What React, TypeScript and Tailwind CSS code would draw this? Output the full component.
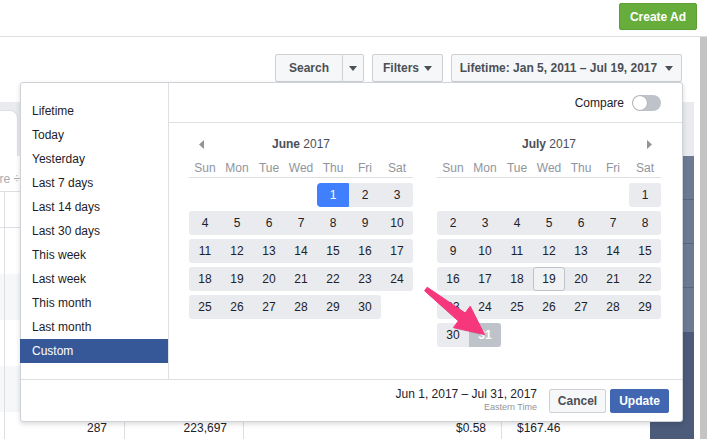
import React from "react";

type Day = number | null;

const june: Day[][] = [
  [null, null, null, null, 1, 2, 3],
  [4, 5, 6, 7, 8, 9, 10],
  [11, 12, 13, 14, 15, 16, 17],
  [18, 19, 20, 21, 22, 23, 24],
  [25, 26, 27, 28, 29, 30, null],
];

const july: Day[][] = [
  [null, null, null, null, null, null, 1],
  [2, 3, 4, 5, 6, 7, 8],
  [9, 10, 11, 12, 13, 14, 15],
  [16, 17, 18, 19, 20, 21, 22],
  [23, 24, 25, 26, 27, 28, 29],
  [30, 31, null, null, null, null, null],
];

const dayNames = ["Sun", "Mon", "Tue", "Wed", "Thu", "Fri", "Sat"];

const presets = [
  "Lifetime",
  "Today",
  "Yesterday",
  "Last 7 days",
  "Last 14 days",
  "Last 30 days",
  "This week",
  "Last week",
  "This month",
  "Last month",
  "Custom",
];

function Caret() {
  return (
    <svg width="8" height="5" viewBox="0 0 8 5">
      <path d="M0 0h8L4 5z" fill="#4b4f56" />
    </svg>
  );
}

function ArrowLeft() {
  return (
    <svg width="5" height="9" viewBox="0 0 5 9">
      <path d="M5 0L0 4.5 5 9z" fill="#90949c" />
    </svg>
  );
}

function ArrowRight() {
  return (
    <svg width="5" height="9" viewBox="0 0 5 9">
      <path d="M0 0l5 4.5L0 9z" fill="#90949c" />
    </svg>
  );
}

type Mark = { start?: number; end?: number; today?: number };

function Week({ days, mark }: { days: Day[]; mark: Mark }) {
  const first = days.findIndex((d) => d !== null);
  let last = -1;
  days.forEach((d, i) => {
    if (d !== null) last = i;
  });
  return (
    <div className="flex h-[24px]">
      {days.map((d, i) => {
        if (d === null) return <div key={i} className="w-[32px] h-[24px]" />;
        const round =
          i === first && i === last
            ? "rounded-[3px]"
            : i === first
            ? "rounded-l-[3px]"
            : i === last
            ? "rounded-r-[3px]"
            : "";
        if (d === mark.start) {
          return (
            <div
              key={i}
              className="w-[32px] h-[24px] flex items-center justify-center bg-[#4080ff] text-white rounded-l-[4px] rounded-r-[1px]"
            >
              {d}
            </div>
          );
        }
        if (d === mark.end) {
          return (
            <div
              key={i}
              className={`w-[32px] h-[24px] flex items-center justify-center bg-[#bec2c9] text-white font-bold ${round}`}
            >
              {d}
            </div>
          );
        }
        if (d === mark.today) {
          return (
            <div key={i} className={`w-[32px] h-[24px] bg-[#e9ebee] ${round}`}>
              <div className="w-[32px] h-[24px] flex items-center justify-center border border-[#bec2c9] bg-[#f1f2f4] rounded-[3px]">
                {d}
              </div>
            </div>
          );
        }
        return (
          <div
            key={i}
            className={`w-[32px] h-[24px] flex items-center justify-center bg-[#e9ebee] ${round}`}
          >
            {d}
          </div>
        );
      })}
    </div>
  );
}

function Month({
  name,
  weeks,
  mark,
  prev,
  next,
}: {
  name: string;
  weeks: Day[][];
  mark: Mark;
  prev?: boolean;
  next?: boolean;
}) {
  return (
    <div className="w-[224px] flex flex-col">
      <div className="flex h-[20px] items-center">
        <div className="w-[24px] flex justify-center">{prev && <ArrowLeft />}</div>
        <div className="flex-1 text-center text-[12px] text-[#4b4f56]">
          <span className="font-bold">{name}</span> 2017
        </div>
        <div className="w-[24px] flex justify-center">{next && <ArrowRight />}</div>
      </div>
      <div className="mt-[4px] flex h-[20px] items-center border-b border-[#dddfe2]">
        {dayNames.map((n) => (
          <div key={n} className="w-[32px] text-center text-[12px] text-[#90949c]">
            {n}
          </div>
        ))}
      </div>
      <div className="mt-[5px] flex flex-col gap-[4px] text-[12px] text-[#1d2129]">
        {weeks.map((w, i) => (
          <Week key={i} days={w} mark={mark} />
        ))}
      </div>
    </div>
  );
}

function DatePopover() {
  return (
    <div className="absolute left-[20px] top-[82px] w-[663px] h-[340px] bg-white border border-[#cfd2d7] rounded-[3px] shadow-[0_2px_5px_rgba(0,0,0,0.15)] flex flex-col">
      <div className="flex h-[296px] shrink-0">
        <div className="w-[148px] border-r border-[#dddfe2] pt-[16px] flex flex-col">
          {presets.map((p) => (
            <div
              key={p}
              className={
                p === "Custom"
                  ? "h-[24px] flex items-center pl-[12px] -ml-[1px] text-[12px] bg-[#365899] text-white"
                  : "h-[24px] flex items-center pl-[11px] text-[12px] text-[#1d2129]"
              }
            >
              {p}
            </div>
          ))}
        </div>
        <div className="flex-1 flex flex-col">
          <div className="h-[40px] border-b border-[#dddfe2] flex items-center justify-end pr-[21px] gap-[8px]">
            <span className="text-[12px] text-[#1d2129]">Compare</span>
            <div className="w-[29px] h-[16px] rounded-full bg-[#bec2c9] p-[1px] flex items-center">
              <div className="w-[14px] h-[14px] rounded-full bg-white shadow-[0_0_0_0.5px_rgba(0,0,0,0.15)]" />
            </div>
          </div>
          <div className="flex pl-[20px] pt-[11px] gap-[24px]">
            <Month name="June" weeks={june} mark={{ start: 1 }} prev />
            <Month name="July" weeks={july} mark={{ end: 31, today: 19 }} next />
          </div>
        </div>
      </div>
      <div className="h-[42px] shrink-0 border-t border-[#dddfe2] flex items-center justify-end pr-[13px]">
        <div className="flex flex-col items-end mr-[12px]">
          <span className="text-[12px] leading-[13px] text-[#1d2129]">
            Jun 1, 2017 – Jul 31, 2017
          </span>
          <span className="text-[9px] leading-[12px] text-[#90949c]">Eastern Time</span>
        </div>
        <button className="w-[57px] h-[24px] bg-[#f6f7f9] border border-[#ced0d4] rounded-[2px] text-[12px] font-bold text-[#4b4f56]">
          Cancel
        </button>
        <button className="ml-[4px] w-[59px] h-[24px] bg-[#4267b2] border border-[#4267b2] rounded-[2px] text-[12px] font-bold text-white">
          Update
        </button>
      </div>
    </div>
  );
}

function PointerArrow() {
  const pts = "427.2,287.2 465.2,313 470.2,306.2 484.5,334.5 453.4,327.6 458.4,321 424.6,290.8";
  return (
    <svg
      className="absolute left-0 top-0 pointer-events-none"
      width="707"
      height="439"
      viewBox="0 0 707 439"
    >
      <polygon points={pts} fill="rgba(0,0,0,0.12)" transform="translate(0.8,1.2)" />
      <polygon
        points={pts}
        fill="#f6377b"
        stroke="#f6377b"
        strokeWidth="1"
        strokeLinejoin="round"
      />
    </svg>
  );
}

function TableRow({ shade }: { shade?: boolean }) {
  return (
    <div className={shade ? "h-[46px] shrink-0 flex bg-[#f6f7f9]" : "h-[46px] shrink-0 flex bg-white"}>
      <div className="w-[5px] border-r border-[#dddfe2]" />
      <div className="w-[120px] border-r border-[#dddfe2]" />
      <div className="w-[119px] border-r border-[#dddfe2]" />
      <div className="w-[258px] border-r border-[#dddfe2]" />
      <div className="flex-1" />
    </div>
  );
}

export default function App() {
  return (
    <div className="relative w-[707px] h-[439px] overflow-hidden bg-white font-['Liberation_Sans',Arial,sans-serif]">
      <div className="h-[37px] border-b border-[#dddfe2] flex justify-end items-start pt-[3px] pr-[10px]">
        <button className="w-[78px] h-[27px] bg-[#66ad3c] border border-[#5c9f35] rounded-[2px] text-[12px] font-bold text-white">
          Create Ad
        </button>
      </div>
      <div className="flex h-[402px]">
        <div className="w-[694px] flex flex-col">
          <div className="h-[65px] shrink-0 flex justify-end items-start pt-[17px] pr-[12px] gap-[8px] text-[12px] font-bold text-[#4b4f56]">
            <div className="flex">
              <div className="w-[68px] h-[28px] flex items-center justify-center bg-[#f6f7f9] border border-[#ced0d4] rounded-l-[2px]">
                Search
              </div>
              <div className="w-[21px] h-[28px] flex items-center justify-center bg-[#f6f7f9] border border-l-0 border-[#ced0d4] rounded-r-[2px]">
                <Caret />
              </div>
            </div>
            <div className="w-[71px] h-[28px] flex items-center justify-center gap-[5px] bg-[#f6f7f9] border border-[#ced0d4] rounded-[2px]">
              Filters <Caret />
            </div>
            <div className="w-[231px] h-[28px] flex items-center justify-center gap-[8px] bg-[#f6f7f9] border border-[#ced0d4] rounded-[2px]">
              Lifetime: Jan 5, 2011 – Jul 19, 2017 <Caret />
            </div>
          </div>
          <div className="h-[54px] shrink-0 bg-[#e9ebee] flex items-end">
            <div className="w-[18px] h-[46px] bg-white border-t border-r border-[#dddfe2] rounded-tr-[8px]" />
          </div>
          <div className="flex flex-1 min-h-0">
            <div className="w-[650px] flex flex-col">
              <div className="h-[35px] shrink-0 w-[20px] flex justify-end items-center pt-[10px] overflow-visible">
                <span className="whitespace-nowrap text-[12px] text-[#a8acb3]">More ÷</span>
              </div>
              <div className="h-[37px] shrink-0 flex border-y border-[#dddfe2]">
                <div className="w-[5px] border-r border-[#dddfe2]" />
              </div>
              <TableRow />
              <TableRow shade />
              <TableRow />
              <TableRow shade />
              <div className="h-[46px] shrink-0 flex text-[12px] leading-[14px] text-[#1d2129]">
                <div className="w-[5px] border-r border-[#dddfe2]" />
                <div className="w-[120px] border-r border-[#dddfe2] text-right pr-[17px] pt-[9px]">287</div>
                <div className="w-[119px] border-r border-[#dddfe2] text-right pr-[16px] pt-[9px]">223,697</div>
                <div className="w-[258px] border-r border-[#dddfe2] text-right pr-[15px] pt-[9px]">$0.58</div>
                <div className="flex-1 pl-[15px] pt-[9px]">$167.46</div>
              </div>
            </div>
            <div className="w-[44px] flex flex-col">
              <div className="h-[44px] shrink-0 bg-[#6c7a94] border-b border-[#58677f]" />
              <div className="h-[44px] shrink-0 bg-[#6c7a94] border-b border-[#58677f]" />
              <div className="h-[44px] shrink-0 bg-[#6c7a94] border-b border-[#58677f]" />
              <div className="h-[44px] shrink-0 bg-[#6c7a94]" />
              <div className="flex-1 bg-[#4b5b79]" />
            </div>
          </div>
        </div>
        <div className="w-[6px] bg-white" />
        <div className="w-[7px] bg-[#c4c4c4]" />
      </div>
      <DatePopover />
      <PointerArrow />
    </div>
  );
}
